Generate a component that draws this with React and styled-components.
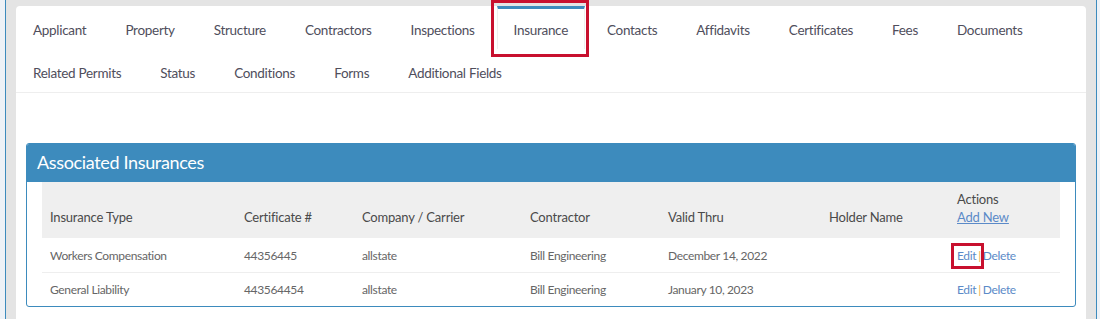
import React from 'react'
import styled, { createGlobalStyle } from 'styled-components'

const Global = createGlobalStyle`
  html, body {
    margin: 0;
    padding: 0;
    background: #eef2f7;
    font-family: 'Lato', 'Liberation Sans', sans-serif;
  }
`

const Frame = styled.div`
  margin: 0 3px 0 5px;
  height: 319px;
  box-sizing: border-box;
  border-left: 1px solid #3d8bbd;
  border-right: 1px solid #3d8bbd;
  background: #e4e4e4;
  padding: 6px 10px 0 10px;
  overflow: hidden;
`

const Panel = styled.div`
  background: #fff;
  border-radius: 4px 4px 0 0;
  height: 400px;
`

const TabBar = styled.ul`
  list-style: none;
  margin: 0;
  padding: 0;
  display: flex;
  flex-wrap: wrap;
  border-bottom: 1px solid #eeeeee;
`

const Tab = styled.li`
  position: relative;
  box-sizing: border-box;
  height: 43px;
  padding: 2px 16px 0 16px;
  margin-right: 5px;
  display: flex;
  align-items: center;
  font-size: 13.5px;
  letter-spacing: -0.3px;
  color: #4f4e5c;
  border-top: 3px solid ${p => (p.active ? '#3d8bbd' : 'transparent')};
  border-left: 1px solid ${p => (p.active ? '#eeeeee' : 'transparent')};
  border-right: 1px solid ${p => (p.active ? '#eeeeee' : 'transparent')};
`

const Callout = styled.span`
  position: absolute;
  border: 3px solid #c8102e;
  pointer-events: none;
  left: ${p => p.l}px;
  top: ${p => p.t}px;
  right: ${p => p.r}px;
  bottom: ${p => p.b}px;
`

const Body = styled.div`
  padding: 50px 10px 0 10px;
`

const Box = styled.section`
  border: 1px solid #3d8bbd;
  border-radius: 3px;
  overflow: hidden;
`

const BoxHeader = styled.h3`
  margin: 0;
  background: #3d8bbd;
  color: #fff;
  font-weight: 400;
  font-size: 18px;
  letter-spacing: -0.35px;
  height: 38px;
  line-height: 37px;
  padding: 0 10px;
`

const Table = styled.div`
  margin: 0 15px;
  display: grid;
  grid-template-columns: 194px 118px 168px 138px 161px 128px 1fr;
`

const HeadCell = styled.div`
  background: #efefef;
  height: 56px;
  padding: 0 0 12px 8px;
  box-sizing: border-box;
  display: flex;
  flex-direction: column;
  justify-content: flex-end;
  font-size: 13px;
  letter-spacing: -0.2px;
  color: #4a4a4a;
  line-height: 18px;
`

const Cell = styled.div`
  height: 34px;
  box-sizing: border-box;
  padding-left: 8px;
  display: flex;
  align-items: center;
  font-size: 12px;
  letter-spacing: -0.35px;
  color: #666;
  border-top: ${p => (p.first ? 'none' : '1px solid #eeeeee')};
`

const Link = styled.a`
  color: #5b8ac8;
  text-decoration: ${p => (p.underline ? 'underline' : 'none')};
  cursor: pointer;
`

const Sep = styled.span`
  color: #f0ad4e;
  margin: 0 2px;
`

const Actions = styled.span`
  position: relative;
  display: inline-flex;
  align-items: center;
`

const tabs = [
  'Applicant', 'Property', 'Structure', 'Contractors', 'Inspections',
  'Insurance', 'Contacts', 'Affidavits', 'Certificates', 'Fees',
  'Documents', 'Related Permits', 'Status', 'Conditions', 'Forms',
  'Additional Fields',
]

const rows = [
  ['Workers Compensation', '44356445', 'allstate', 'Bill Engineering', 'December 14, 2022', ''],
  ['General Liability', '443564454', 'allstate', 'Bill Engineering', 'January 10, 2023', ''],
]

const heads = ['Insurance Type', 'Certificate #', 'Company / Carrier', 'Contractor', 'Valid Thru', 'Holder Name']

export default function App() {
  return (
    <>
      <Global />
      <Frame>
        <Panel>
          <TabBar>
            {tabs.map(t => (
              <Tab key={t} active={t === 'Insurance'}>
                {t}
                {t === 'Insurance' && <Callout l={-7} t={-9} r={-5} b={-8} />}
              </Tab>
            ))}
          </TabBar>
          <Body>
            <Box>
              <BoxHeader>Associated Insurances</BoxHeader>
              <Table>
                {heads.map(h => <HeadCell key={h}>{h}</HeadCell>)}
                <HeadCell>
                  <span>Actions</span>
                  <Link underline>Add New</Link>
                </HeadCell>
                {rows.map((r, i) => (
                  <React.Fragment key={i}>
                    {r.map((c, j) => <Cell key={j} first={i === 0}>{c}</Cell>)}
                    <Cell first={i === 0}>
                      <Actions>
                        <Link>Edit</Link>
                        {i === 0 && <Callout l={-6} t={-5} r={-8} b={-6} />}
                      </Actions>
                      <Sep>|</Sep>
                      <Link>Delete</Link>
                    </Cell>
                  </React.Fragment>
                ))}
              </Table>
            </Box>
          </Body>
        </Panel>
      </Frame>
    </>
  )
}
